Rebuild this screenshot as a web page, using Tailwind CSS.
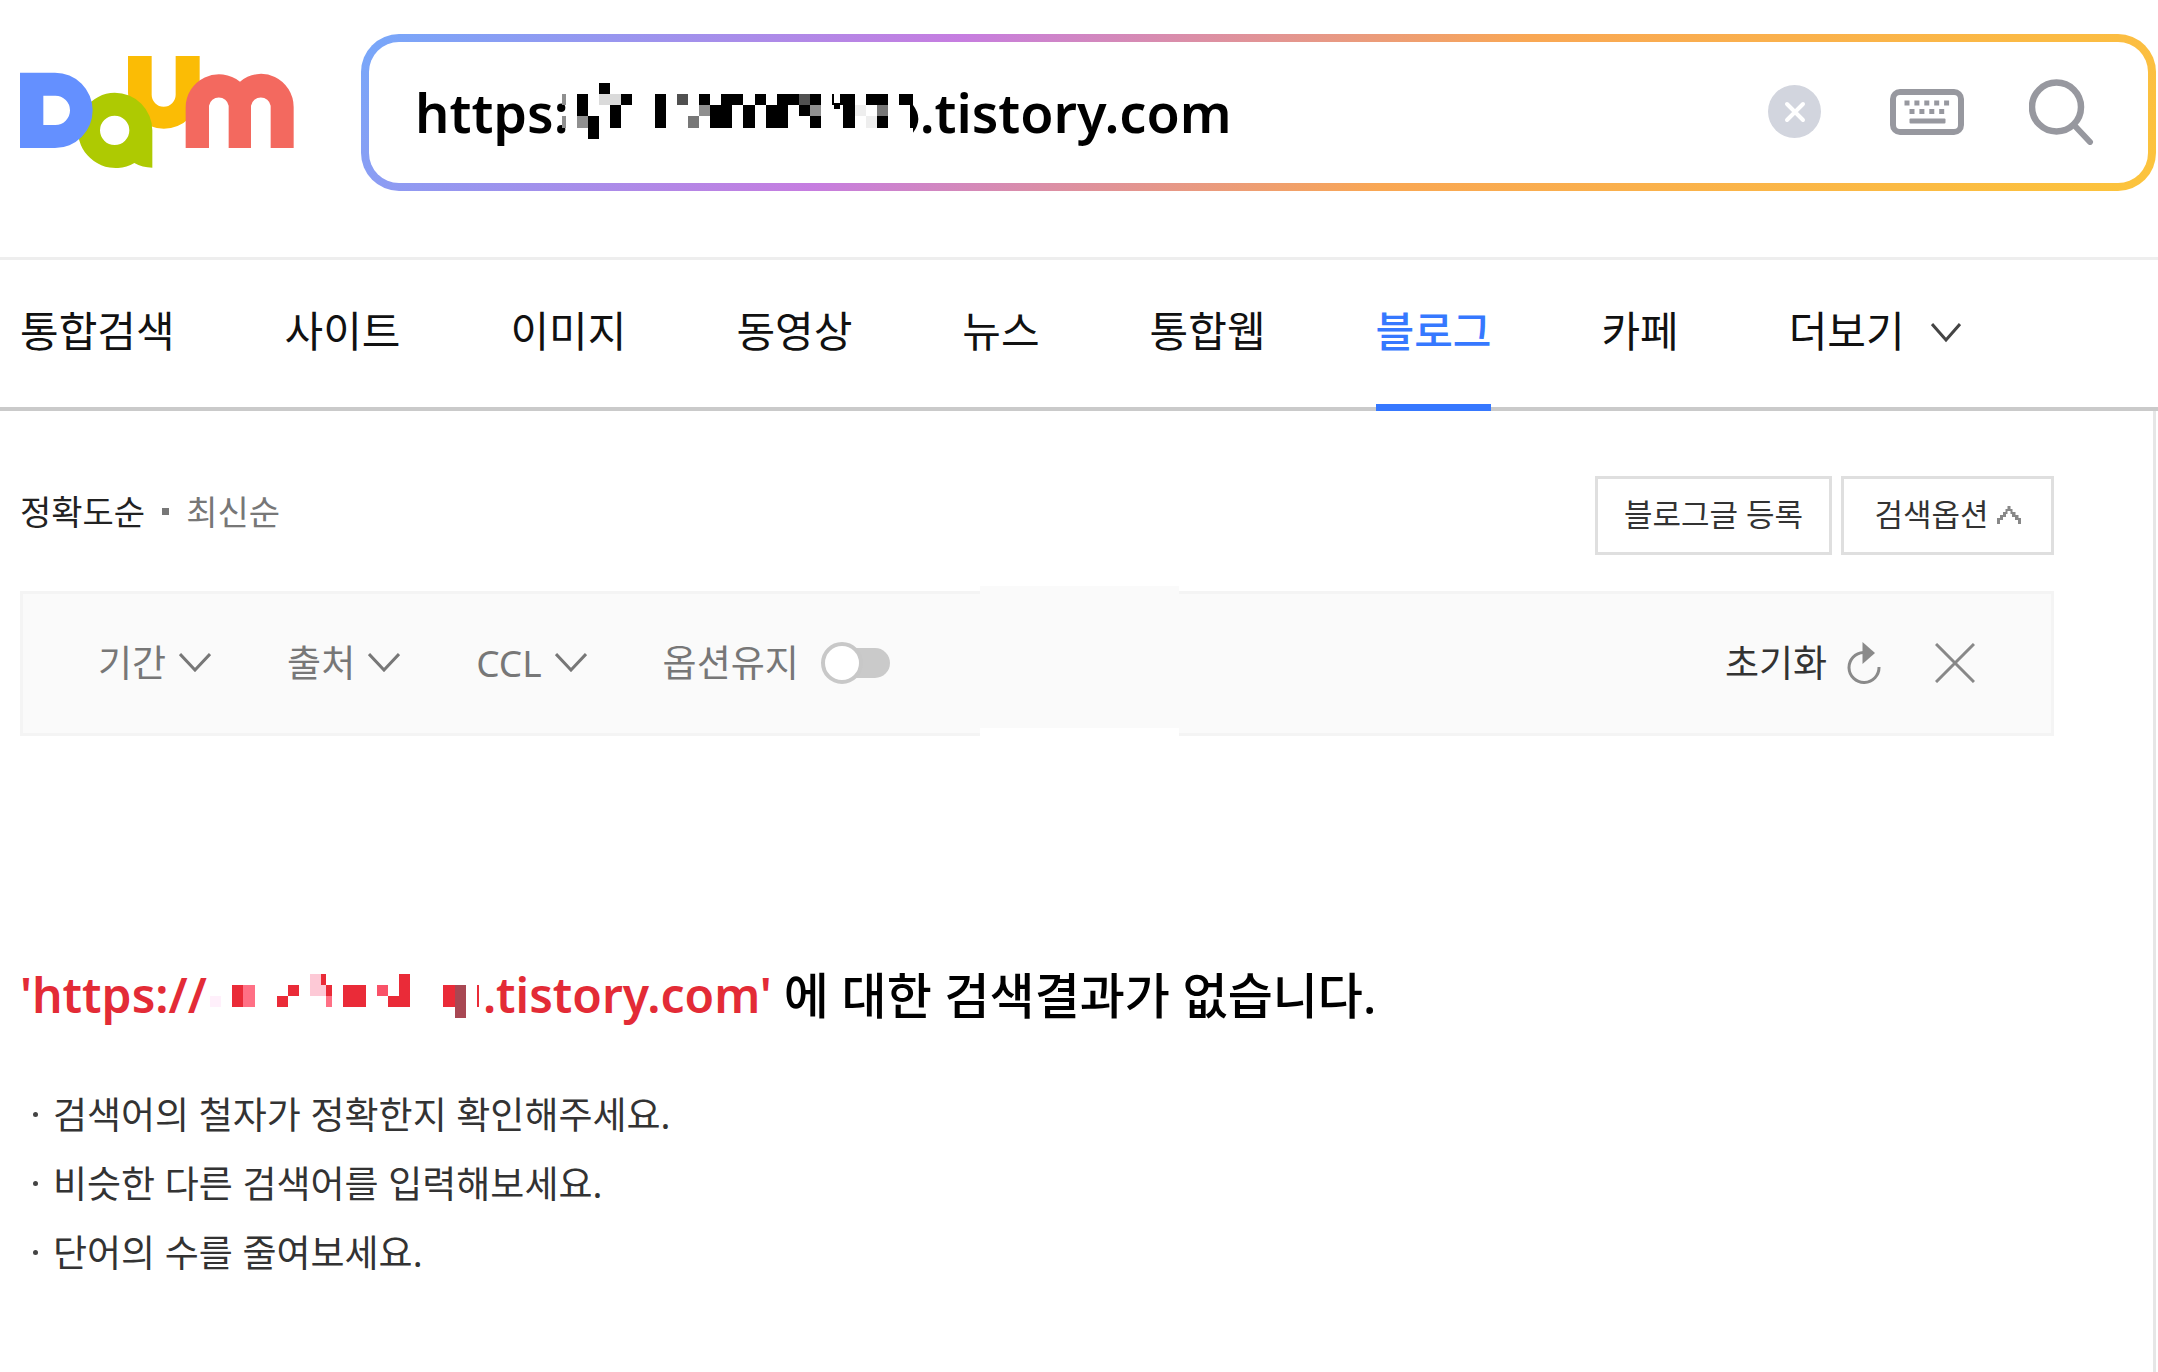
<!DOCTYPE html>
<html lang="ko">
<head>
    <meta charset="UTF-8">
    <meta name="viewport" content="width=device-width, initial-scale=1.0">
    <title>Daum 블로그 검색</title>
    <script src="https://cdn.jsdelivr.net/npm/@tailwindcss/browser@4"></script>
</head>
<body class="bg-white text-black font-['Noto_Sans','Noto_Sans_CJK_KR',sans-serif] min-h-screen flex flex-col">

    <!-- Header -->
    <header class="flex items-center pl-5 pt-[34px] pb-[66px] pr-0.5 border-b-3 border-[#eeeeee]">
        <a href="#" aria-label="Daum" class="shrink-0 mr-[67px] pb-0.5">
            <svg class="w-[274px] h-[112px]" viewBox="60 78 822 336">
                <path fill="#fbbc05" d="M384 78h71v116a36 36 0 0 0 72 0V78h72v111a107.500 107.500 0 0 1-215 0z"/>
                <path fill="#aeca02" fill-rule="evenodd" d="M344 188a113 113 0 0 1 113 113v112q-30 0-54-14a113 113 0 1 1-59-211zM344 257a44 44 0 1 0 0 88a44 44 0 1 0 0-88z"/>
                <path fill="#6490ff" fill-rule="evenodd" d="M60 128h105a113 113 0 0 1 0 226H60zM130 197v88h36a44 44 0 0 0 0-88z"/>
                <path fill="#f3695f" d="M557 354V232a100 100 0 0 1 163-77a98 100 0 0 1 161 77v122h-69V227a30 30 0 0 0-59 0v127h-67V227a30 30 0 0 0-59 0v127z"/>
            </svg>
        </a>
        <form class="flex-1 h-[157px] p-2 rounded-[38px] bg-[linear-gradient(135deg,#76a8fa_0%,#c67de0_31%,#f9a754_60%,#fcc43c_100%)]">
            <div class="relative h-full flex items-center rounded-[30px] bg-white pl-[46px] pr-[54px] pb-0.5">
                <input type="text" aria-label="검색어" value="https:                         .tistory.com" class="flex-1 min-w-0 pt-0.5 text-[54px] font-semibold outline-none">
                <svg class="absolute left-[193px] top-[34px] w-[360px] h-[64px]" viewBox="69 18 1080 192" shape-rendering="crispEdges">
                    <path fill="#000" d="M180 39h33v33h-33zM114 72h33v66h-33zM147 138h33v69h-33zM246 72h33v33h-33zM213 105h33v69h-33zM348 72h33v102h-33zM480 72h33v33h-33zM546 72h66v33h-66zM513 105h66v69h-66zM648 72h33v33h-33zM612 105h36v69h-36zM714 72h66v33h-66zM681 105h66v69h-66zM780 105h33v33h-33zM813 72h33v33h-33zM813 138h33v36h-33zM879 72h6v33h-6zM903 72h45v33h-45zM885 100h18v18h-18zM912 105h36v69h-36zM981 72h66v33h-66zM1014 138h33v36h-33zM1080 72h42v33h-42z"/>
                    <path fill="#dadada" d="M180 72h66v33h-66z"/>
                    <path fill="#eeeeee" d="M948 105h33v33h-33zM981 138h33v36h-33z"/>
                    <path fill="#8f8f8f" d="M69 72h12v33h-12zM69 138h12v36h-12zM114 138h33v36h-33zM480 105h33v33h-33zM813 105h33v33h-33z"/>
                    <path fill="#777" d="M447 138h33v36h-33zM1014 105h33v33h-33z"/>
                    <path fill="#505050" d="M414 72h33v33h-33zM780 72h33v33h-33z"/>
                    <path fill="#000" shape-rendering="auto" d="M1113 105h9q32 42 0 83v-14h-9z"/>
                </svg>
                <button type="button" aria-label="지우기" class="ml-6">
                    <svg class="size-[53px]" viewBox="0 0 53 53" fill="none">
                        <circle cx="26.500" cy="26.500" r="26.500" fill="#d2d5de"/>
                        <path d="M19 19l16 16M35 19l-16 16" stroke="#fff" stroke-width="4" stroke-linecap="round"/>
                    </svg>
                </button>
                <button type="button" aria-label="키보드" class="ml-[69px]">
                    <svg class="w-[74px] h-[46px]" viewBox="0 0 74 46" fill="none">
                        <rect x="3" y="3" width="68" height="40" rx="7" stroke="#97989f" stroke-width="6"/>
                        <path d="M14.500 14H60M19.500 22.500H56" stroke="#97989f" stroke-width="5" stroke-dasharray="5 4.900"/>
                        <rect x="19.500" y="29.500" width="36" height="5" rx="1" fill="#97989f"/>
                    </svg>
                </button>
                <button type="submit" aria-label="검색" class="ml-[65px]">
                    <svg class="w-[65px] h-[66px]" viewBox="0 0 65 66" fill="none" stroke="#97989f">
                        <circle cx="27.500" cy="28" r="24.500" stroke-width="6.500"/>
                        <path d="M45 46l16 17" stroke-width="6" stroke-linecap="round"/>
                    </svg>
                </button>
            </div>
        </form>
    </header>

    <!-- Search tabs -->
    <nav class="flex gap-[110px] pl-5 h-[151px] border-b-4 border-[#cacaca] text-[42px] leading-[142px] whitespace-nowrap text-[#111111]">
        <a href="#">통합검색</a>
        <a href="#">사이트</a>
        <a href="#">이미지</a>
        <a href="#">동영상</a>
        <a href="#">뉴스</a>
        <a href="#">통합웹</a>
        <a href="#" class="h-[151px] border-b-7 border-[#3678ff] font-medium text-[#3678ff]">블로그</a>
        <a href="#">카페</a>
        <a href="#" class="flex items-center gap-[26px] h-[142px]">더보기
            <svg class="w-[30px] h-[24px] pt-1" viewBox="0 0 30 20" fill="none" stroke="#444" stroke-width="3"><path d="M1 1l14 16L29 1"/></svg>
        </a>
    </nav>

    <main class="flex-1 mr-0.5 border-r-3 border-[#e6e6e6] pl-5 pr-[99px] pt-[65px]">
        <!-- Sort and buttons -->
        <div class="flex items-center justify-between h-[79px]">
            <div class="flex items-center gap-[17px] text-[34px] leading-[40px] pb-2">
                <a href="#" class="text-[#222222]">정확도순</a>
                <span class="size-[7px] bg-[#777777]"></span>
                <a href="#" class="text-[#777777]">최신순</a>
            </div>
            <div class="flex gap-[9px] text-[31px] text-[#333333]">
                <button type="button" class="w-[237px] h-[79px] pb-0.5 border-3 border-[#dfdfdf]">블로그글 등록</button>
                <button type="button" class="w-[213px] h-[79px] pb-0.5 border-3 border-[#dfdfdf] flex items-center justify-center gap-2">검색옵션
                    <svg class="w-6 h-[18px]" viewBox="0 0 24 18" fill="#888"><path d="M10.500 0h3v3h2v3h3v3h3v3h2.500v6H21v-4h-3v-3h-3V8h-1.500V5h-3v3H9v3H6v3H3v4H0v-6h3V9h3V6h2.500V3h2z"/></svg>
                </button>
            </div>
        </div>

        <!-- Search options -->
        <div class="relative flex items-center mt-9 h-[145px] border-3 border-[#f4f4f4] bg-[#fafafa] pl-[75px] pr-[76px] pb-0.5 text-[37px] text-[#777777]">
            <div class="absolute left-[957px] -top-2 w-[199px] h-[142px] bg-[#fafafa]"></div>
            <div class="absolute left-[957px] -bottom-[3px] w-[199px] h-2 bg-white"></div>
            <div class="flex-1 flex items-center gap-[76px]">
                <button type="button" class="flex items-center gap-[13px]">기간
                    <svg class="w-8 h-[19px]" viewBox="0 0 32 19" fill="none" stroke="#777" stroke-width="3"><path d="M1 1l15 16L31 1"/></svg>
                </button>
                <button type="button" class="flex items-center gap-[13px]">출처
                    <svg class="w-8 h-[19px]" viewBox="0 0 32 19" fill="none" stroke="#777" stroke-width="3"><path d="M1 1l15 16L31 1"/></svg>
                </button>
                <button type="button" class="flex items-center gap-[13px]">CCL
                    <svg class="w-8 h-[19px]" viewBox="0 0 32 19" fill="none" stroke="#777" stroke-width="3"><path d="M1 1l15 16L31 1"/></svg>
                </button>
                <label class="flex items-center gap-[22px]">옵션유지
                    <input type="checkbox" class="appearance-none w-[69px] h-[42px] flex items-center before:size-[42px] before:rounded-full before:border-4 before:border-[#c8c8c8] before:bg-white before:z-10 after:w-[48px] after:h-[30px] after:-ml-[21px] after:rounded-r-full after:bg-[#cacaca]">
                </label>
            </div>
            <button type="button" class="flex items-center gap-[20px] text-[#333333]">초기화
                <svg class="w-[34px] h-[42px]" viewBox="0 0 34 42"><path d="M16.500 10.500A15 15 0 1 0 32 25" fill="none" stroke="#8a8a8a" stroke-width="3"/><path d="M15.500 0L28 11 15.500 22z" fill="#8a8a8a"/></svg>
            </button>
            <button type="button" aria-label="닫기" class="ml-[54px]">
                <svg class="size-10" viewBox="0 0 40 40" fill="none" stroke="#888" stroke-width="3"><path d="M1 1l38 38M39 1L1 39"/></svg>
            </button>
        </div>

        <!-- No result message -->
        <h2 class="flex items-center mt-[224px] text-[49px] leading-[70px] whitespace-nowrap">
            <span class="flex items-center text-[48px] font-semibold text-[#e32b36]">'https://
                <svg class="w-[278px] h-[47px] -ml-1 mr-0.5" viewBox="400 60 545 140" preserveAspectRatio="none" shape-rendering="crispEdges">
                    <path fill="#ea2b38" d="M457 98h21v67h-21zM545 131h22v34h-22zM567 98h21v33h-21zM631 66h10v32h-10zM641 98h12v33h-12zM674 98h45v67h-45zM784 66h22v99h-22zM762 131h22v34h-22zM870 98h24v67h-24zM937 98h4v67h-4z"/>
                    <path fill="#ff7085" d="M478 98h24v67h-24zM641 131h12v34h-12z"/>
                    <path fill="#fdc9d6" d="M610 66h21v32h-21zM610 98h31v33h-31z"/>
                    <path fill="#f95268" d="M741 98h21v33h-21z"/>
                    <path fill="#fff0fb" d="M414 131h21v34h-21z"/>
                    <path fill="#a84753" d="M894 98h21v100h-21z"/>
                </svg>.tistory.com'</span>
            <span class="ml-3 font-medium">에 대한 검색결과가 없습니다.</span>
        </h2>

        <ul class="mt-[50px] pl-[10px] text-[37px] leading-[69px] text-[#333333]">
            <li class="flex items-center gap-[15px]"><span class="ml-[3px] size-[5px] rounded-full bg-[#444444]"></span>검색어의 철자가 정확한지 확인해주세요.</li>
            <li class="flex items-center gap-[15px]"><span class="ml-[3px] size-[5px] rounded-full bg-[#444444]"></span>비슷한 다른 검색어를 입력해보세요.</li>
            <li class="flex items-center gap-[15px]"><span class="ml-[3px] size-[5px] rounded-full bg-[#444444]"></span>단어의 수를 줄여보세요.</li>
        </ul>
    </main>

</body>
</html>
